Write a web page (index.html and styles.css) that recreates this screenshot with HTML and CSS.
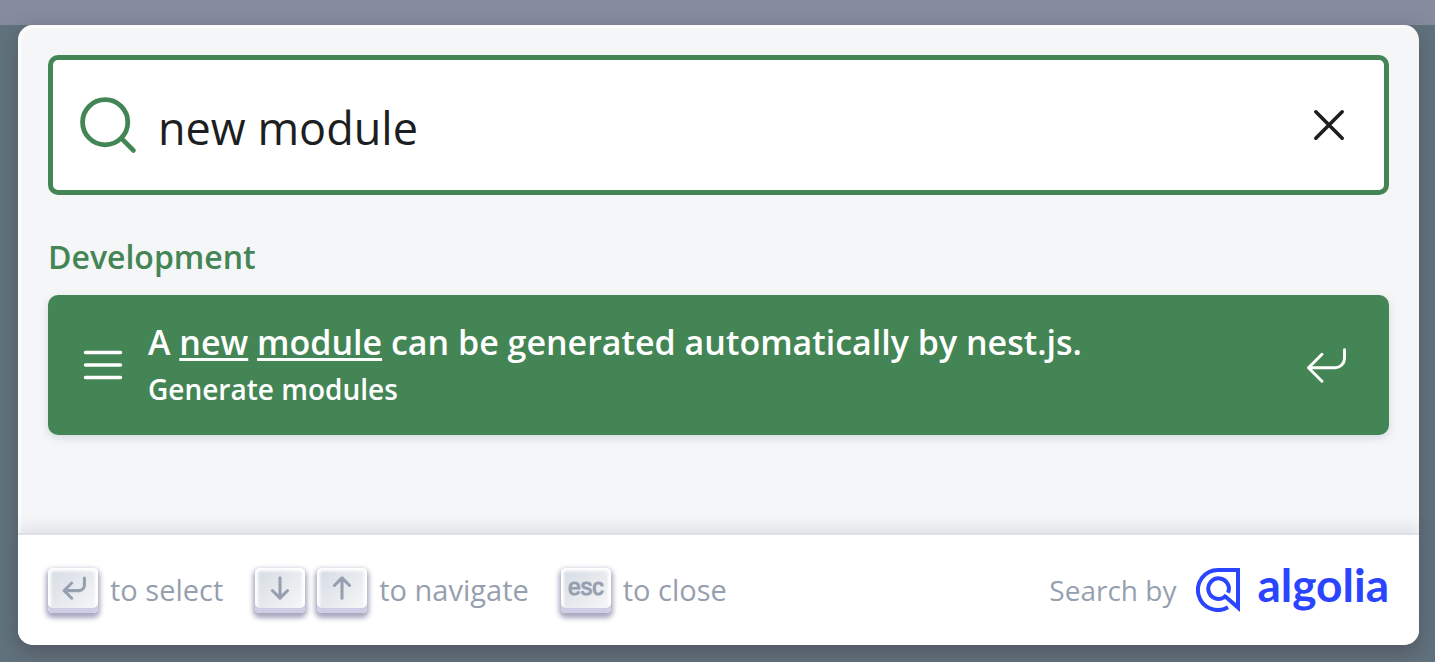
FILE: index.html
```html
<!DOCTYPE html>
<html lang="en">
<head>
<meta charset="utf-8">
<meta name="viewport" content="width=device-width, initial-scale=1">
<title>Search</title>
<link rel="stylesheet" href="styles.css">
</head>
<body>
<div class="page-band"></div>
<main class="modal" role="dialog" aria-label="Search">
  <div class="content">
    <form class="searchbox">
      <label class="search-label" for="query" aria-label="Search">
        <svg class="icon-search" viewBox="0 0 20 20" aria-hidden="true"><path d="M14.386 14.386l4.0877 4.0877-4.0877-4.0877c-2.9418 2.9419-7.7115 2.9419-10.6533 0-2.9419-2.9418-2.9419-7.7115 0-10.6533 2.9418-2.9419 7.7115-2.9419 10.6533 0 2.9419 2.9418 2.9419 7.7115 0 10.6533z"/></svg>
      </label>
      <input class="query" id="query" type="text" value="new module" autocomplete="off" spellcheck="false">
      <button class="reset" type="reset" aria-label="Clear the query">
        <svg class="icon-reset" viewBox="0 0 20 20" aria-hidden="true"><path d="M5.6 5.6l8.8 8.8M14.4 5.6l-8.8 8.8"/></svg>
      </button>
    </form>
    <section class="results">
      <h2 class="group-title">Development</h2>
      <a class="hit" href="#">
        <svg class="icon-hit" viewBox="0 0 20 20" aria-hidden="true"><path d="M17 5H3M17 10H3M17 15H3"/></svg>
        <span class="hit-text">
          <span class="hit-title">A <mark>new</mark> <mark>module</mark> can be generated automatically by nest.js.</span>
          <span class="hit-path">Generate modules</span>
        </span>
        <svg class="icon-enter" viewBox="0 0 20 20" aria-hidden="true"><path d="M18 3v4c0 2-2 4-4 4H2M8 17l-6-6 6-6"/></svg>
      </a>
    </section>
  </div>
  <footer class="footer">
    <ul class="commands">
      <li class="command">
        <kbd class="key"><svg viewBox="0 0 15 15" role="img" aria-label="Enter key"><path d="M12 3.53v3c0 1-1 2-2 2H4M7 11.53l-3-3 3-3"/></svg></kbd>
        <span>to select</span>
      </li>
      <li class="command">
        <kbd class="key"><svg viewBox="0 0 15 15" role="img" aria-label="Arrow down"><path d="M7.5 3.5v8M10.5 8.5l-3 3-3-3"/></svg></kbd>
        <kbd class="key"><svg viewBox="0 0 15 15" role="img" aria-label="Arrow up"><path d="M7.5 11.5v-8M10.5 6.5l-3-3-3 3"/></svg></kbd>
        <span>to navigate</span>
      </li>
      <li class="command">
        <kbd class="key key-esc">esc</kbd>
        <span>to close</span>
      </li>
    </ul>
    <a class="brand" href="#">
      <span>Search by</span>
      <svg class="brand-mark" viewBox="0 0 44 44" aria-hidden="true"><path d="M32 39.3A20 20 0 1 1 22 2H42V39.5L29 28.2M32 24.8A10.3 10.3 0 1 0 28 29.4L30.2 27.2"/></svg>
      <span class="brand-name">algolia</span>
    </a>
  </footer>
</main>
</body>
</html>
```
FILE: styles.css
```css
* { box-sizing: border-box; }

body {
  margin: 0;
  min-height: 100vh;
  background: #60727c;
  font-family: "Open Sans", "Noto Sans", sans-serif;
  color: #969faf;
}

svg {
  flex: none;
  fill: none;
  stroke: currentColor;
  stroke-linecap: round;
  stroke-linejoin: round;
}

.page-band { height: 25px; background: #868b9f; }

.modal {
  display: flex;
  flex-direction: column;
  min-height: 620px;
  margin: 0 16px 17px 18px;
  border-radius: 15px;
  background: #f5f6f7;
  box-shadow: inset 3px 3px 0 0 rgba(255, 255, 255, 0.5), 0 8px 20px 0 #555a64;
}

.content { flex: 1; padding: 30px; }

.searchbox {
  display: flex;
  align-items: center;
  height: 140px;
  padding: 0 25px;
  border: 5px solid #448555;
  border-radius: 10px;
  background: #fff;
}

.search-label { display: flex; color: #448555; }
.icon-search { width: 60px; height: 60px; stroke-width: 1.6; }

.query {
  flex: 1;
  min-width: 0;
  height: 100%;
  padding: 4px 0 0 20px;
  border: 0;
  outline: 0;
  background: transparent;
  font: 400 45px "Open Sans", "Noto Sans", sans-serif;
  color: #1c1e21;
}

.reset {
  display: flex;
  padding: 0;
  border: 0;
  background: none;
  color: #1c1e21;
}
.icon-reset { width: 60px; height: 60px; stroke-width: 1.2; }

.group-title {
  margin: 39px 0 16px;
  font-size: 32px;
  line-height: 45px;
  font-weight: 600;
  color: #448555;
}

.hit {
  display: flex;
  align-items: center;
  height: 140px;
  padding: 0 40px 0 30px;
  border-radius: 10px;
  background: #448555;
  box-shadow: 0 3px 8px 0 #d4d9e1;
  color: #fff;
  font-weight: 600;
  text-decoration: none;
}
.icon-hit { width: 50px; height: 50px; stroke-width: 1.4; }
.icon-enter { width: 45px; height: 45px; stroke-width: 1.3; }

.hit-text {
  flex: 1;
  min-width: 0;
  display: flex;
  flex-direction: column;
  padding-left: 20px;
}
.hit-title { font-size: 34px; line-height: 48px; }
.hit-path { font-size: 28px; line-height: 46px; }

mark {
  background: none;
  color: inherit;
  text-decoration: underline;
  text-decoration-thickness: 3px;
  text-underline-offset: 3px;
}

.footer {
  display: flex;
  align-items: center;
  justify-content: space-between;
  height: 110px;
  padding: 0 30px;
  border-radius: 0 0 15px 15px;
  background: #fff;
  box-shadow: 0 -2px 0 0 #e0e1e8, 0 -8px 15px 0 rgba(80, 85, 140, 0.12);
  font-size: 28px;
  line-height: 40px;
}

.commands {
  display: flex;
  gap: 32px;
  margin: 0;
  padding: 0;
  list-style: none;
  font-size: 29px;
}
.command { display: flex; align-items: center; gap: 12px; }

.key {
  display: flex;
  align-items: center;
  justify-content: center;
  width: 50px;
  height: 45px;
  padding-bottom: 5px;
  border-radius: 5px;
  background: linear-gradient(-225deg, #d5dbe4, #f8f8f8);
  box-shadow: inset 0 -5px 0 0 #cdcde6, inset 0 0 3px 3px #fff, 0 3px 5px 2px rgba(30, 35, 90, 0.4);
}
.key svg { width: 38px; height: 38px; stroke-width: 1.2; }
.key-esc {
  font: 400 23px "Liberation Sans", sans-serif;
  -webkit-text-stroke: 1px currentColor;
}

.brand {
  display: flex;
  align-items: center;
  color: inherit;
  text-decoration: none;
}
.brand-mark {
  width: 44px;
  height: 44px;
  margin: 0 17px 0 20px;
  color: #2a44ff;
  stroke-width: 4;
  stroke-linecap: butt;
  stroke-linejoin: miter;
}
.brand-name {
  padding-bottom: 10px;
  font: 700 46px/44px Lato, sans-serif;
  color: #2a44ff;
}
```
